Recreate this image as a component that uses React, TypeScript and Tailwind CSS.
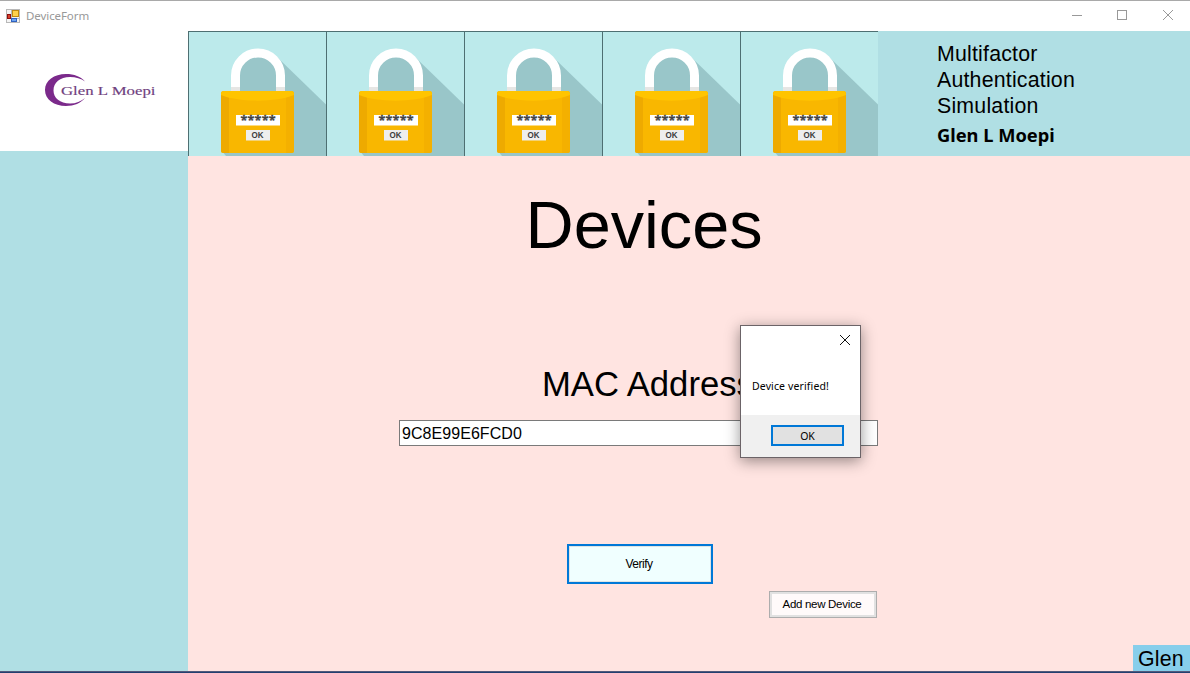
import React from "react";

function FormIcon() {
  return (
    <svg width="14" height="14" viewBox="0 0 14 14" shapeRendering="crispEdges">
      <rect x="0.5" y="0.5" width="13" height="13" fill="#f4f4f4" stroke="#b8b8b8" />
      <path d="M5.5 0v14M0 9.5h14" stroke="#b8b8b8" />
      <rect x="6" y="1" width="7" height="7" fill="#c08a10" />
      <rect x="7" y="2" width="5" height="5" fill="#ffd24a" />
      <rect x="1" y="5" width="4" height="5" fill="#8e0f0f" />
      <rect x="2" y="6" width="2" height="3" fill="#d8402c" />
      <rect x="5" y="9" width="6" height="4" fill="#2f62c0" />
      <rect x="6" y="10" width="4" height="2" fill="#6da4f2" />
    </svg>
  );
}

function TitleBar() {
  return (
    <header className="flex h-[31px] shrink-0 items-center border-t border-[#a9a9a9] bg-white pl-1.5">
      <FormIcon />
      <span className="ml-1.5 font-['Noto_Sans',sans-serif] text-[11.5px] leading-4 tracking-[-0.08px] text-[#999]">DeviceForm</span>
      <div className="ml-auto flex h-full items-center">
        <svg width="118" height="30" fill="none" stroke="#999" className="block">
          <path d="M0 14.5h10" shapeRendering="crispEdges" />
          <rect x="45.5" y="9.5" width="9" height="9" shapeRendering="crispEdges" />
          <path d="M91 9l10 10M101 9l-10 10" />
        </svg>
      </div>
    </header>
  );
}

function Logo() {
  return (
    <div className="h-[120px] bg-white">
      <svg width="188" height="120" className="block">
        <path d="M85 50.5C81 45.5 74 43 66 43C54 43 45 49.5 45 59C45 68.500 54 75 66 75C74 75 81 72 85 67C81 70.500 76 72.500 70 72.500C60 72.500 53.500 67 53.500 59.500C53.500 51.500 60 46 70 46C76 46 81 47.500 85 50.500Z" fill="#7b2a8b" />
        <text x="61" y="63.500" textLength="94.500" lengthAdjust="spacingAndGlyphs" fontFamily="'Liberation Serif', serif" fontSize="13.500" fill="#70417e" stroke="#70417e" strokeWidth="0.15">
          Glen L Moepi
        </text>
      </svg>
    </div>
  );
}

function PadlockTile() {
  return (
    <svg width="138" height="125" className="block shrink-0">
      <rect width="138" height="125" fill="#bceaeb" />
      <path d="M89 26L138 73.500V125H38L33 119L60 60Z" fill="#99c6c9" />
      <path d="M33 60H60L89 26L60 10H0V119H33Z" fill="#bceaeb" />
      <path d="M50 60V44.500a20 20 0 0 1 40 0V60Z" fill="#99c6c9" />
      <path d="M47.500 60V44.500a22.500 22.500 0 0 1 45 0V60" fill="none" stroke="#fff" strokeWidth="9" />
      <path d="M43 56h9v4h-9zM88 56h9v4h-9z" fill="#e6e6e4" />
      <rect x="33" y="60" width="73" height="62" rx="2.500" fill="#f9b700" />
      <path d="M33 62.500V119.500a2.500 2.500 0 0 0 2.500 2.500H41V65Z" fill="#eeaa00" />
      <path d="M98 65l8-3v57.500a2.500 2.500 0 0 1-2.500 2.500H98Z" fill="#f4b000" />
      <path d="M33 64V62.500a2.500 2.500 0 0 1 2.500-2.500h68a2.500 2.500 0 0 1 2.500 2.500V64C88 71.500 51 71.500 33 64Z" fill="#ffc400" />
      <rect x="48" y="84" width="44" height="10.500" fill="#fff" />
      <text x="52.500" y="94" textLength="35" fontFamily="'Open Sans', sans-serif" fontSize="12.500" fontWeight="700" fill="#444" stroke="#444" strokeWidth="0.300">
        *****
      </text>
      <rect x="58" y="99" width="24" height="10.500" fill="#eee" />
      <text x="63.500" y="107.300" textLength="12" lengthAdjust="spacingAndGlyphs" fontFamily="'Liberation Sans', sans-serif" fontSize="8.500" fontWeight="700" fill="#3c3c3c">
        OK
      </text>
      <path d="M0.500 0V125M0 0.500H138" stroke="#4e6f72" shapeRendering="crispEdges" />
    </svg>
  );
}

function MessageBox() {
  return (
    <div
      role="dialog"
      className="absolute left-[740px] top-[325px] flex h-[133px] w-[121px] flex-col border border-[#6b6367] bg-white font-['Noto_Sans',sans-serif] text-[11px] shadow-[0_3px_14px_rgba(0,0,0,0.42)]"
    >
      <div className="flex justify-end pr-[9px] pt-[9px]">
        <svg width="11" height="11" stroke="#111" className="block">
          <path d="M0 0l10 10M10 0l-10 10" />
        </svg>
      </div>
      <p className="ml-[11px] mt-8 whitespace-nowrap text-[10.500px] leading-4 tracking-[0.13px] text-black">Device verified!</p>
      <div className="mt-auto flex h-[42px] justify-end bg-[#f0f0f0] pr-4 pt-2.5">
        <button className="h-[21px] w-[73px] border-2 border-[#0078d7] bg-[#e1e1e1] text-[10.500px] leading-4">OK</button>
      </div>
    </div>
  );
}

export default function App() {
  return (
    <div className="relative flex h-[673px] w-[1190px] flex-col overflow-hidden bg-[#ffe4e1] font-['Liberation_Sans',Arial,sans-serif] text-black">
      <TitleBar />
      <div className="flex min-h-0 flex-1">
        <aside className="w-[188px] shrink-0 bg-[#b0dfe4]">
          <Logo />
        </aside>
        <div className="flex min-w-0 flex-1 flex-col">
          <div className="flex h-[125px] shrink-0 bg-[#b0dfe4]">
            {[0, 1, 2, 3, 4].map((tile) => (
              <PadlockTile key={tile} />
            ))}
            <div className="ml-[59px] pt-2.5">
              <p className="w-[160px] text-[21.33px] leading-[26px] tracking-[0.2px]">Multifactor Authentication Simulation</p>
              <p className="mt-1 font-['Noto_Sans',sans-serif] text-[18.300px] font-bold leading-6">Glen L Moepi</p>
            </div>
          </div>
          <main className="flex min-h-0 flex-1 flex-col">
            <h1 className="ml-[337.5px] mt-[31px] text-[66.67px] leading-[76px]">Devices</h1>
            <label htmlFor="mac" className="ml-[354px] mt-[101px] text-[34.67px] leading-10">
              MAC Address
            </label>
            <input
              id="mac"
              readOnly
              defaultValue="9C8E99E6FCD0"
              className="ml-[211px] mt-4 h-[26px] w-[479px] border border-[#7a7a7a] bg-white px-0.5 pt-0.5 text-base leading-5 tracking-[0.06px] outline-none"
            />
            <button className="ml-[379px] mt-[98px] h-10 w-[146px] shrink-0 border-2 border-[#0078d7] bg-[#f0ffff] pr-0.5 text-[12px] tracking-[-0.5px] shadow-[inset_0_0_0_1px_#dfe4e4]">
              Verify
            </button>
            <button className="ml-[581px] mt-[7px] h-[27px] w-[108px] shrink-0 border border-[#adadad] bg-[#fffafa] pr-0.5 text-[11.5px] tracking-[-0.3px] shadow-[inset_0_0_0_2px_#e1e1e1]">
              Add new Device
            </button>
            <div className="ml-auto mt-auto h-[26px] w-[57px] bg-[#87ceeb] pl-[5px] text-[21.33px] leading-7 tracking-[0.2px]">Glen</div>
          </main>
        </div>
      </div>
      <footer className="h-0.5 shrink-0 border-t border-[#52597b] bg-[#233f70]" />
      <MessageBox />
    </div>
  );
}
